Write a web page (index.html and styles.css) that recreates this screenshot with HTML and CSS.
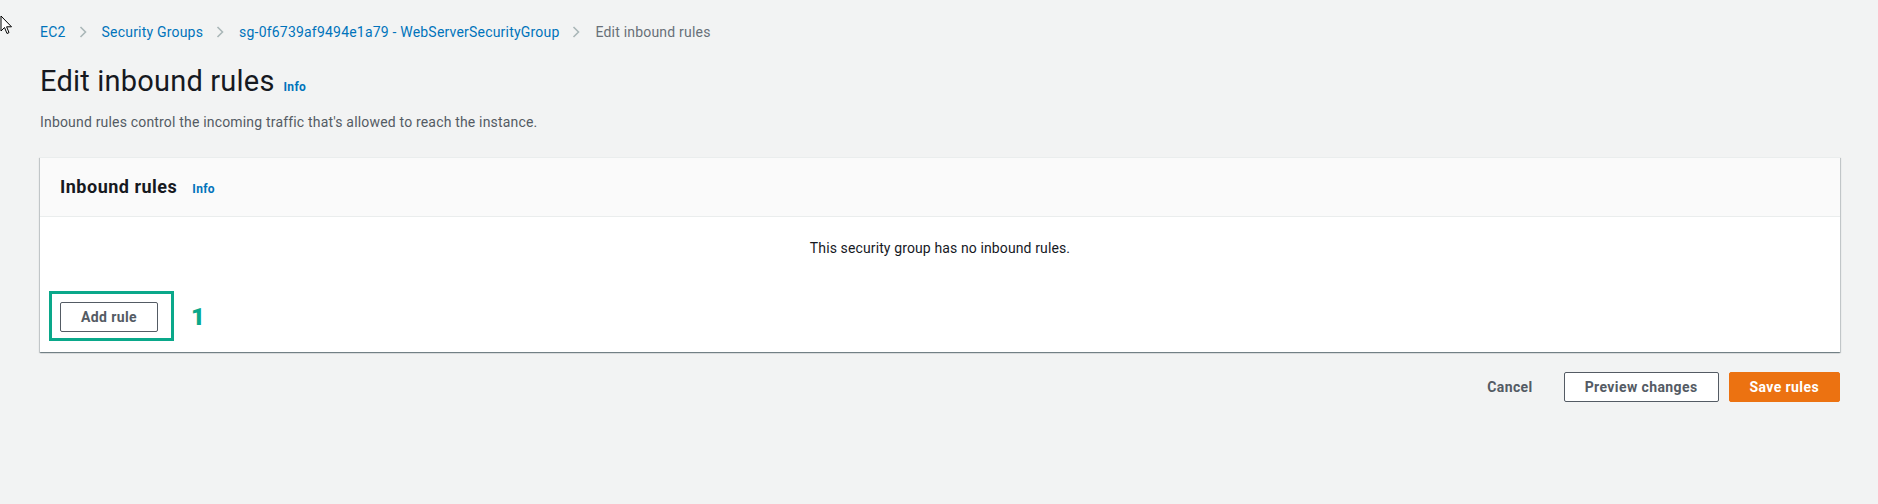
FILE: index.html
```html
<!DOCTYPE html>
<html lang="en">
<head>
<meta charset="utf-8">
<title>Edit inbound rules</title>
<link rel="stylesheet" href="styles.css">
</head>
<body>
<svg class="cursor" width="13" height="20" viewBox="0 0 13 20"><path d="M1 1 L1 16 L4.5 12.5 L7 18.5 L9 17.6 L6.6 11.8 L11.5 11.8 Z" fill="#fff" stroke="#000" stroke-width="1" stroke-linejoin="round"/></svg>
<div class="page">
  <nav class="breadcrumbs">
    <a class="crumb" href="#">EC2</a>
    <svg class="sep" width="8" height="12" viewBox="0 0 8 12"><path d="M1.5 1 L6.5 6 L1.5 11" fill="none" stroke="#aab7b8" stroke-width="1.6"/></svg>
    <a class="crumb" href="#">Security Groups</a>
    <svg class="sep" width="8" height="12" viewBox="0 0 8 12"><path d="M1.5 1 L6.5 6 L1.5 11" fill="none" stroke="#aab7b8" stroke-width="1.6"/></svg>
    <a class="crumb" href="#">sg-0f6739af9494e1a79 - WebServerSecurityGroup</a>
    <svg class="sep" width="8" height="12" viewBox="0 0 8 12"><path d="M1.5 1 L6.5 6 L1.5 11" fill="none" stroke="#aab7b8" stroke-width="1.6"/></svg>
    <span class="crumb current">Edit inbound rules</span>
  </nav>

  <div class="title-row">
    <h1 class="title">Edit inbound rules</h1>
    <a class="info" href="#">Info</a>
  </div>
  <p class="desc">Inbound rules control the incoming traffic that's allowed to reach the instance.</p>

  <section class="panel">
    <header class="panel-head">
      <h2 class="panel-title">Inbound rules</h2>
      <a class="info" href="#">Info</a>
    </header>
    <div class="panel-body">
      <p class="empty">This security group has no inbound rules.</p>
      <div class="actions">
        <button class="btn">Add rule</button>
        <span class="highlight"></span>
        <span class="step">1</span>
      </div>
    </div>
  </section>

  <div class="footer">
    <button class="btn btn-link">Cancel</button>
    <button class="btn">Preview changes</button>
    <button class="btn btn-primary">Save rules</button>
  </div>
</div>
</body>
</html>
```

FILE: styles.css
```css
* { box-sizing: border-box; }

html, body {
  margin: 0;
  padding: 0;
  background: #f2f3f3;
  font-family: Roboto, "Open Sans", Arial, sans-serif;
  color: #16191f;
}

body { position: relative; height: 504px; }

.cursor {
  position: absolute;
  left: 0;
  top: 15px;
}

.page {
  padding: 22px 38px 0 40px;
}

.breadcrumbs {
  display: flex;
  align-items: center;
  font-size: 14px;
  line-height: 20px;
  height: 20px;
  letter-spacing: 0.2px;
}

.crumb {
  color: #0073bb;
  text-decoration: none;
}

.crumb.current { color: #687078; }

.sep {
  margin: 0 15px 0 13px;
  display: block;
}

.title-row {
  display: flex;
  align-items: baseline;
  margin-top: 21px;
}

.title {
  margin: 0;
  font-size: 29px;
  line-height: 36px;
  font-weight: 400;
  letter-spacing: 0.2px;
  color: #16191f;
}

.info {
  color: #0073bb;
  font-size: 12px;
  font-weight: 700;
  letter-spacing: 0.3px;
  text-decoration: none;
  margin-left: 9px;
}

.desc {
  margin: 13px 0 0;
  font-size: 14px;
  line-height: 20px;
  letter-spacing: 0.18px;
  color: #545b64;
}

.panel {
  margin-top: 25px;
  background: #fff;
  border-top: 1px solid #eaeded;
  box-shadow: 0 1px 1px 0 rgba(0, 28, 36, 0.35), 1px 1px 1px 0 rgba(0, 28, 36, 0.15), -1px 1px 1px 0 rgba(0, 28, 36, 0.15);
}

.panel-head {
  display: flex;
  align-items: baseline;
  padding: 18px 20px;
  background: #fafafa;
  border-bottom: 1px solid #eaeded;
}

.panel-title {
  margin: 0;
  font-size: 18px;
  line-height: 22px;
  font-weight: 700;
  letter-spacing: 0.5px;
  color: #16191f;
}

.panel-head .info { margin-left: 15px; }

.panel-body {
  padding: 21px 20px 20px;
}

.empty {
  margin: 0;
  text-align: center;
  font-size: 14px;
  line-height: 20px;
  letter-spacing: 0.12px;
  color: #16191f;
}

.actions {
  position: relative;
  display: flex;
  margin-top: 44px;
}

.btn {
  font-family: inherit;
  font-size: 14px;
  font-weight: 700;
  line-height: 20px;
  letter-spacing: 0.4px;
  padding: 4px 20px;
  border: 1px solid #545b64;
  border-radius: 2px;
  background: #fff;
  color: #545b64;
  cursor: pointer;
}

.btn-link {
  border-color: transparent;
  background: transparent;
}

.btn-primary {
  background: #ec7211;
  border-color: #ec7211;
  color: #fff;
}

.highlight {
  position: absolute;
  left: -11px;
  top: -11px;
  width: 125px;
  height: 50px;
  border: 3px solid #0aa88a;
}

.step {
  position: absolute;
  left: 131px;
  top: 0;
  font-size: 24px;
  line-height: 30px;
  font-weight: 900;
  color: #0aa88a;
}

.footer {
  display: flex;
  justify-content: flex-end;
  gap: 10px;
  margin-top: 20px;
}
```
